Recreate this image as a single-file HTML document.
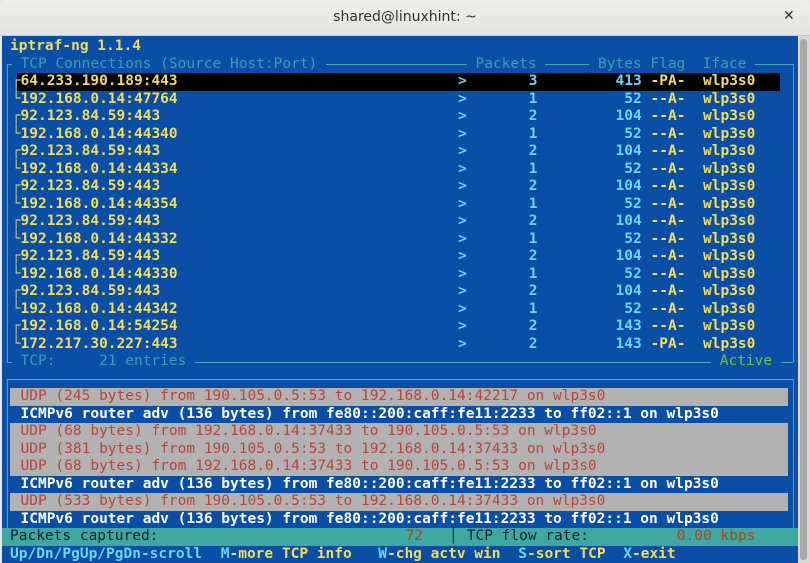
<!DOCTYPE html>
<html><head><meta charset="utf-8"><style>
*{margin:0;padding:0;box-sizing:border-box}
body{width:810px;height:563px;overflow:hidden;background:#e8e8e6;position:relative;font-family:"DejaVu Sans Mono","Liberation Mono",monospace;}
#tb{position:absolute;left:0;top:0;width:810px;height:36px;background:linear-gradient(#efefed,#e3e3e1);border-bottom:1px solid #c8c8c6;border-radius:6px 6px 0 0;}
#tb .t{position:absolute;left:0;width:810px;top:9px;text-align:center;font-family:"DejaVu Sans","Liberation Sans",sans-serif;font-size:14px;color:#303030}
#tb .x{position:absolute;left:783px;top:8px;font-family:"DejaVu Sans",sans-serif;font-size:14px;font-weight:bold;color:#333}
#term{position:absolute;left:2px;top:36px;width:796px;height:527px;background:#0b4ea6;overflow:hidden}
#sb{position:absolute;left:798px;top:36px;width:12px;height:527px;background:#d8d8d6}
#sb div{position:absolute;left:2px;top:3px;width:7px;height:521px;background:#a8a8a6;border-radius:3px}
.r{position:absolute;left:0;height:17.5px;width:796px;font-size:14.5px;line-height:17.5px;font-weight:bold;white-space:pre;transform:translateY(2px)}
.r span{position:absolute;top:0}
.y{color:#f2dc5c}.c{color:#6fd3f2}.w{color:#fff}.d{color:#3f9db3;font-weight:normal}.gr{color:#6fc43c}.rd{color:#b8443a;font-weight:normal}
.tr{color:#c9c06a;font-weight:normal}
.a{left:18.5px}.g{left:456px}.p{left:491.75px;width:43.75px;text-align:right}.b{left:596px;width:43.75px;text-align:right}.f{left:648.5px}.i{left:701px}
.hl{position:absolute;height:1px;background:#4aa6b6}
.vl{position:absolute;width:1px;background:#4aa6b6}
.bk{background:#0b4ea6}
</style></head><body>
<div id="tb"><div class="t">shared@linuxhint: ~</div><div class="x">✕</div></div>
<div id="term">
<div class="hl" style="left:5px;top:28px;width:786px"></div>
<div class="vl" style="left:5px;top:28px;height:298px"></div>
<div class="vl" style="left:791px;top:28px;height:298px"></div>
<div class="hl" style="left:5px;top:326px;width:786px"></div>
<div class="hl" style="left:5px;top:343px;width:786px"></div>
<div class="vl" style="left:5px;top:343px;height:150px"></div>
<div class="vl" style="left:791px;top:343px;height:150px"></div>

<div class="r" style="top:0"><span class="y" style="left:8px">iptraf-ng 1.1.4</span></div>
<div class="r" style="top:17.5px"><span class="d bk" style="left:9.75px"> TCP Connections (Source Host:Port) </span><span class="d bk" style="left:464.75px"> Packets </span><span class="d bk" style="left:587.25px"> Bytes Flag  Iface </span></div>

<div style="position:absolute;left:15px;top:37px;width:763px;height:17.5px;background:#000"></div>
<div class="r" style="top:35px"><span class="tr" style="left:9.75px">┌</span><span class="a y">64.233.190.189:443</span><span class="g c">&gt;</span><span class="p c">3</span><span class="b c">413</span><span class="f y">-PA-</span><span class="i y">wlp3s0</span></div>
<div class="r" style="top:52.5px"><span class="tr" style="left:9.75px">└</span><span class="a y">192.168.0.14:47764</span><span class="g c">&gt;</span><span class="p c">1</span><span class="b c">52</span><span class="f y">--A-</span><span class="i y">wlp3s0</span></div>
<div class="r" style="top:70px"><span class="tr" style="left:9.75px">┌</span><span class="a y">92.123.84.59:443</span><span class="g c">&gt;</span><span class="p c">2</span><span class="b c">104</span><span class="f y">--A-</span><span class="i y">wlp3s0</span></div>
<div class="r" style="top:87.5px"><span class="tr" style="left:9.75px">└</span><span class="a y">192.168.0.14:44340</span><span class="g c">&gt;</span><span class="p c">1</span><span class="b c">52</span><span class="f y">--A-</span><span class="i y">wlp3s0</span></div>
<div class="r" style="top:105px"><span class="tr" style="left:9.75px">┌</span><span class="a y">92.123.84.59:443</span><span class="g c">&gt;</span><span class="p c">2</span><span class="b c">104</span><span class="f y">--A-</span><span class="i y">wlp3s0</span></div>
<div class="r" style="top:122.5px"><span class="tr" style="left:9.75px">└</span><span class="a y">192.168.0.14:44334</span><span class="g c">&gt;</span><span class="p c">1</span><span class="b c">52</span><span class="f y">--A-</span><span class="i y">wlp3s0</span></div>
<div class="r" style="top:140px"><span class="tr" style="left:9.75px">┌</span><span class="a y">92.123.84.59:443</span><span class="g c">&gt;</span><span class="p c">2</span><span class="b c">104</span><span class="f y">--A-</span><span class="i y">wlp3s0</span></div>
<div class="r" style="top:157.5px"><span class="tr" style="left:9.75px">└</span><span class="a y">192.168.0.14:44354</span><span class="g c">&gt;</span><span class="p c">1</span><span class="b c">52</span><span class="f y">--A-</span><span class="i y">wlp3s0</span></div>
<div class="r" style="top:175px"><span class="tr" style="left:9.75px">┌</span><span class="a y">92.123.84.59:443</span><span class="g c">&gt;</span><span class="p c">2</span><span class="b c">104</span><span class="f y">--A-</span><span class="i y">wlp3s0</span></div>
<div class="r" style="top:192.5px"><span class="tr" style="left:9.75px">└</span><span class="a y">192.168.0.14:44332</span><span class="g c">&gt;</span><span class="p c">1</span><span class="b c">52</span><span class="f y">--A-</span><span class="i y">wlp3s0</span></div>
<div class="r" style="top:210px"><span class="tr" style="left:9.75px">┌</span><span class="a y">92.123.84.59:443</span><span class="g c">&gt;</span><span class="p c">2</span><span class="b c">104</span><span class="f y">--A-</span><span class="i y">wlp3s0</span></div>
<div class="r" style="top:227.5px"><span class="tr" style="left:9.75px">└</span><span class="a y">192.168.0.14:44330</span><span class="g c">&gt;</span><span class="p c">1</span><span class="b c">52</span><span class="f y">--A-</span><span class="i y">wlp3s0</span></div>
<div class="r" style="top:245px"><span class="tr" style="left:9.75px">┌</span><span class="a y">92.123.84.59:443</span><span class="g c">&gt;</span><span class="p c">2</span><span class="b c">104</span><span class="f y">--A-</span><span class="i y">wlp3s0</span></div>
<div class="r" style="top:262.5px"><span class="tr" style="left:9.75px">└</span><span class="a y">192.168.0.14:44342</span><span class="g c">&gt;</span><span class="p c">1</span><span class="b c">52</span><span class="f y">--A-</span><span class="i y">wlp3s0</span></div>
<div class="r" style="top:280px"><span class="tr" style="left:9.75px">┌</span><span class="a y">192.168.0.14:54254</span><span class="g c">&gt;</span><span class="p c">2</span><span class="b c">143</span><span class="f y">--A-</span><span class="i y">wlp3s0</span></div>
<div class="r" style="top:297.5px"><span class="tr" style="left:9.75px">└</span><span class="a y">172.217.30.227:443</span><span class="g c">&gt;</span><span class="p c">2</span><span class="b c">143</span><span class="f y">-PA-</span><span class="i y">wlp3s0</span></div>
<div class="r" style="top:315px"><span class="d bk" style="left:9.75px"> TCP:     21 entries </span><span class="gr bk" style="left:709px;font-weight:normal"> Active </span></div>

<div style="position:absolute;left:8px;top:352px;width:778px;height:17.5px;background:#b2b2b2"></div>
<div style="position:absolute;left:8px;top:387px;width:778px;height:52.5px;background:#b2b2b2"></div>
<div style="position:absolute;left:8px;top:457px;width:778px;height:17.5px;background:#b2b2b2"></div>
<div class="r" style="top:350px"><span class="a rd">UDP (245 bytes) from 190.105.0.5:53 to 192.168.0.14:42217 on wlp3s0</span></div>
<div class="r" style="top:367.5px"><span class="a w">ICMPv6 router adv (136 bytes) from fe80::200:caff:fe11:2233 to ff02::1 on wlp3s0</span></div>
<div class="r" style="top:385px"><span class="a rd">UDP (68 bytes) from 192.168.0.14:37433 to 190.105.0.5:53 on wlp3s0</span></div>
<div class="r" style="top:402.5px"><span class="a rd">UDP (381 bytes) from 190.105.0.5:53 to 192.168.0.14:37433 on wlp3s0</span></div>
<div class="r" style="top:420px"><span class="a rd">UDP (68 bytes) from 192.168.0.14:37433 to 190.105.0.5:53 on wlp3s0</span></div>
<div class="r" style="top:437.5px"><span class="a w">ICMPv6 router adv (136 bytes) from fe80::200:caff:fe11:2233 to ff02::1 on wlp3s0</span></div>
<div class="r" style="top:455px"><span class="a rd">UDP (533 bytes) from 190.105.0.5:53 to 192.168.0.14:37433 on wlp3s0</span></div>
<div class="r" style="top:472.5px"><span class="a w">ICMPv6 router adv (136 bytes) from fe80::200:caff:fe11:2233 to ff02::1 on wlp3s0</span></div>

<div style="position:absolute;left:0;top:492px;width:796px;height:17.5px;background:#3fa8a2"></div>
<div class="r" style="top:490px;font-weight:normal"><span style="left:8px;color:#0d1e28">Packets captured:</span><span style="left:403.5px;color:#a24a22">72</span><span style="left:447px;color:#0d1e28">│</span><span style="left:464.75px;color:#0d1e28">TCP flow rate:</span><span style="left:674.75px;color:#a24a22">0.00 kbps</span></div>
<div class="r" style="top:507.5px"><span class="c" style="left:8px">Up/Dn/PgUp/PgDn-scroll</span><span style="left:218.75px"><span class="c" style="position:static">M</span><span class="y" style="position:static">-more TCP info</span></span><span style="left:376.25px"><span class="c" style="position:static">W</span><span class="y" style="position:static">-chg actv win</span></span><span style="left:516.25px"><span class="c" style="position:static">S</span><span class="y" style="position:static">-sort TCP</span></span><span style="left:621.25px"><span class="c" style="position:static">X</span><span class="y" style="position:static">-exit</span></span></div>
</div>
<div id="sb"><div></div></div>
</body></html>
